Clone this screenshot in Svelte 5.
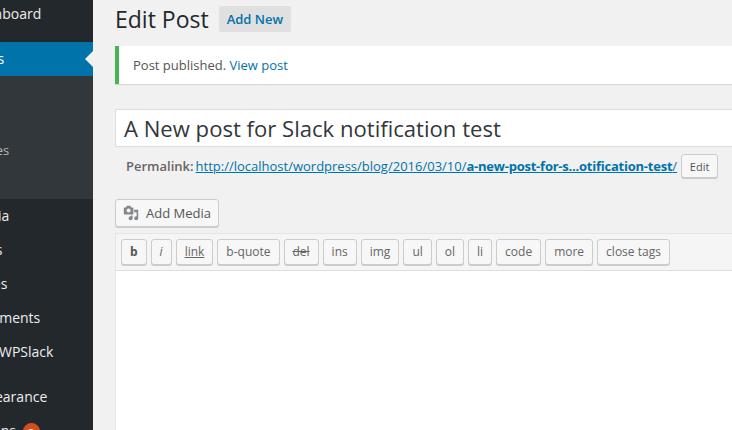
<script>
  const tags = [
    { label: 'b', cls: 'bold' }, { label: 'i', cls: 'ital' }, { label: 'link', cls: 'link' },
    { label: 'b-quote' }, { label: 'del', cls: 'del' }, { label: 'ins' }, { label: 'img' },
    { label: 'ul' }, { label: 'ol' }, { label: 'li' }, { label: 'code' }, { label: 'more' }, { label: 'close tags' }
  ];
</script>

<div class="page">
  <aside class="side">
    <nav class="menu">
      <div class="item first">Dashboard</div>
      <div class="item current">Posts<span class="arrow"></span></div>
      <div class="sub">
        <div class="subitem">All Posts</div>
        <div class="subitem">Add New</div>
        <div class="subitem">Categories</div>
        <div class="subitem">Tags</div>
      </div>
      <div class="item">Media</div>
      <div class="item">Links</div>
      <div class="item">Pages</div>
      <div class="item">Comments</div>
      <div class="item slack">WPSlack</div>
      <div class="item gap">Appearance</div>
      <div class="item">Plugins <span class="badge">3</span></div>
    </nav>
  </aside>
  <main class="main">
    <header class="head">
      <h1>Edit Post</h1>
      <span class="addnew">Add New</span>
    </header>
    <div class="notice">Post published. <a href="#v">View post</a></div>
    <div class="title">A New post for Slack notification test</div>
    <div class="perma">
      <strong>Permalink:</strong>
      <a href="#p">http://localhost/wordpress/blog/2016/03/10/<b>a-new-post-for-s...otification-test</b>/</a>
      <span class="btn small">Edit</span>
    </div>
    <div class="media-row">
      <span class="btn media">
        <svg width="18" height="18" viewBox="0 0 20 20" aria-hidden="true">
          <path fill="#82878c" d="M13 11V4c0-.55-.45-1-1-1h-1.67L9 1H5L3.67 3H2c-.55 0-1 .45-1 1v7c0 .55.45 1 1 1h10c.55 0 1-.45 1-1zM7 4.5c1.38 0 2.5 1.12 2.5 2.5S8.38 9.5 7 9.5 4.5 8.38 4.5 7 5.62 4.5 7 4.5zM14 6h5v10.5c0 1.38-1.12 2.5-2.5 2.5S14 17.88 14 16.5s1.12-2.5 2.5-2.5c.17 0 .34.02.5.05V9h-3V6zm-4 8.05V13h2v3.5c0 1.38-1.12 2.5-2.5 2.5S7 17.88 7 16.5 8.12 14 9.5 14c.17 0 .34.02.5.05z"/>
        </svg>
        <span>Add Media</span>
      </span>
    </div>
    <div class="editor">
      <div class="toolbar">
        {#each tags as t}
          <span class="tag {t.cls ?? ''}">{t.label}</span>
        {/each}
      </div>
      <div class="area"></div>
    </div>
  </main>
</div>

<style>
  :global(body) { margin: 0; background: #f1f1f1; }
  .page {
    width: 732px; height: 430px; overflow: hidden; display: flex;
    font-family: "Open Sans", sans-serif; font-size: 13px; color: #444; background: #f1f1f1;
  }
  .side { width: 93px; flex: none; background: #23282d; overflow: hidden; }
  .menu { width: 160px; margin-left: -67px; position: relative; }
  .item {
    height: 34px; line-height: 34px; padding-left: 36px; font-size: 14px; color: #eee; position: relative;
    white-space: nowrap;
  }
  .first { height: 42px; line-height: 28px; }
  .current { background: #0073aa; color: #fff; }
  .arrow {
    position: absolute; right: 0; top: 9px; border: 8px solid transparent; border-right-color: #f1f1f1;
  }
  .sub { background: #32373c; padding: 7px 0 7px; height: 109px; }
  .subitem { height: 27px; line-height: 27px; padding-left: 12px; font-size: 13px; color: #b4b9be; }
  .slack { padding-left: 66px; }
  .gap { margin-top: 11px; }
  .badge {
    display: inline-block; width: 17px; height: 17px; line-height: 17px; border-radius: 50%;
    background: #d54e21; color: #fff; font-size: 9px; font-weight: 600; text-align: center; vertical-align: 1px;
    margin-left: 3px;
  }
  .main { flex: 1; min-width: 0; padding-left: 22px; }
  .head { display: flex; align-items: flex-start; height: 46px; }
  h1 { margin: 0; font-size: 23px; font-weight: 400; color: #23282d; line-height: 38px; }
  .addnew {
    margin: 6px 0 0 10px; height: 26px; line-height: 26px; padding: 0 8px; background: #e0e0e0; border-radius: 2px;
    font-size: 13px; font-weight: 600; color: #0073aa;
  }
  .notice {
    box-sizing: border-box; height: 38px; line-height: 38px; background: #fff; border-left: 4px solid #46b450;
    padding-left: 14px; box-shadow: 0 1px 1px rgba(0,0,0,.1); color: #555; margin-bottom: 25px;
  }
  a { color: #0073aa; }
  .notice a { text-decoration: none; }
  .title {
    box-sizing: border-box; height: 38px; line-height: 37px; background: #fff; border: 1px solid #ddd; border-right: 0;
    padding-left: 8px; font-size: 22.1px; color: #32373c; white-space: nowrap;
  }
  .perma { display: flex; align-items: center; height: 24px; margin-top: 7px; padding-left: 11px; white-space: nowrap; color: #666; }
  .perma strong { font-weight: 600; margin-right: 2px; }
  .perma b { font-weight: 700; letter-spacing: -.23px; }
  .btn {
    box-sizing: border-box; display: inline-flex; align-items: center; background: #f7f7f7; border: 1px solid #ccc;
    border-radius: 3px; box-shadow: 0 1px 0 #ccc; color: #555;
  }
  .small { height: 24px; width: 37px; justify-content: center; font-size: 11px; margin-left: 4px; }
  .media-row { margin-top: 21px; height: 34px; }
  .media { height: 28px; padding: 0 7px; gap: 7px; width: 104px; white-space: nowrap; }
  .editor { border: 1px solid #e5e5e5; border-right: 0; background: #fff; height: 300px; }
  .toolbar {
    box-sizing: border-box; height: 37px; background: #f5f5f5; border-bottom: 1px solid #ddd; display: flex; gap: 4px;
    padding: 5px 0 0 5px;
  }
  .tag {
    box-sizing: border-box; height: 26px; line-height: 24px; padding: 0 8px; background: #f7f7f7; border: 1px solid #ccc;
    border-radius: 3px; box-shadow: 0 1px 0 #ccc; font-size: 12px; color: #666; white-space: nowrap;
  }
  .bold { font-weight: 700; color: #555; }
  .ital { font-style: italic; }
  .link { text-decoration: underline; }
  .del { text-decoration: line-through; }
  .area { background: #fff; }
</style>
